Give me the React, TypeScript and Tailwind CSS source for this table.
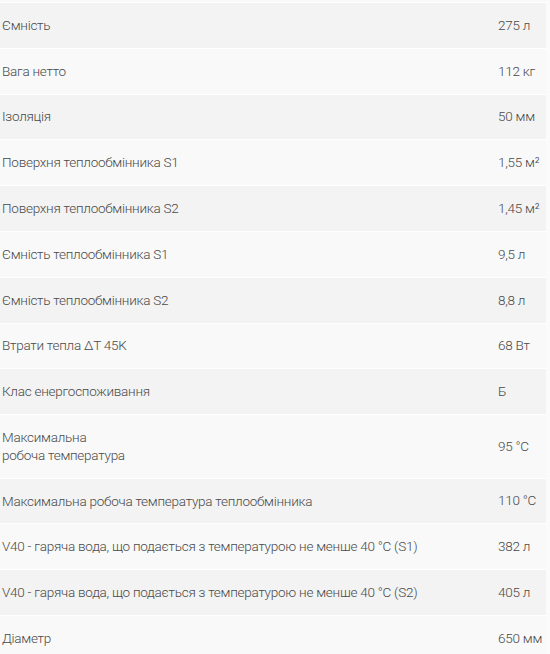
const rows: { label: string; value: string; tall?: boolean }[] = [
  { label: "Ємність", value: "275 л" },
  { label: "Вага нетто", value: "112 кг" },
  { label: "Ізоляція", value: "50 мм" },
  { label: "Поверхня теплообмінника S1", value: "1,55 м²" },
  { label: "Поверхня теплообмінника S2", value: "1,45 м²" },
  { label: "Ємність теплообмінника S1", value: "9,5 л" },
  { label: "Ємність теплообмінника S2", value: "8,8 л" },
  { label: "Втрати тепла ΔT 45K", value: "68 Вт" },
  { label: "Клас енергоспоживання", value: "Б" },
  { label: "Максимальна\nробоча температура", value: "95 °C", tall: true },
  { label: "Максимальна робоча температура теплообмінника", value: "110 °C" },
  { label: "V40 - гаряча вода, що подається з температурою не менше 40 °C (S1)", value: "382 л" },
  { label: "V40 - гаряча вода, що подається з температурою не менше 40 °C (S2)", value: "405 л" },
  { label: "Діаметр", value: "650 мм" },
];

export default function App() {
  return (
    <div className="h-[654px] overflow-hidden bg-[#fbfbfb] font-['Roboto',sans-serif] text-[13.5px] font-light tracking-[-0.25px] text-[#4a4a4a]">
      <div className="w-[546px]">
        <div className="h-[2px] bg-[#f8f8f8]" />
        {rows.map((r, i) => (
          <div
            key={i}
            className={`flex items-center border-t border-white pb-[1px] ${
              r.tall ? "h-[63.5px]" : "h-[45.8px]"
            } ${i % 2 === 0 ? "bg-[#f3f3f3]" : "bg-[#f9f9f9]"}`}
          >
            <div className="w-[498px] whitespace-pre-line pl-[2px] leading-[18px]">{r.label}</div>
            <div className="whitespace-nowrap">{r.value}</div>
          </div>
        ))}
      </div>
    </div>
  );
}
